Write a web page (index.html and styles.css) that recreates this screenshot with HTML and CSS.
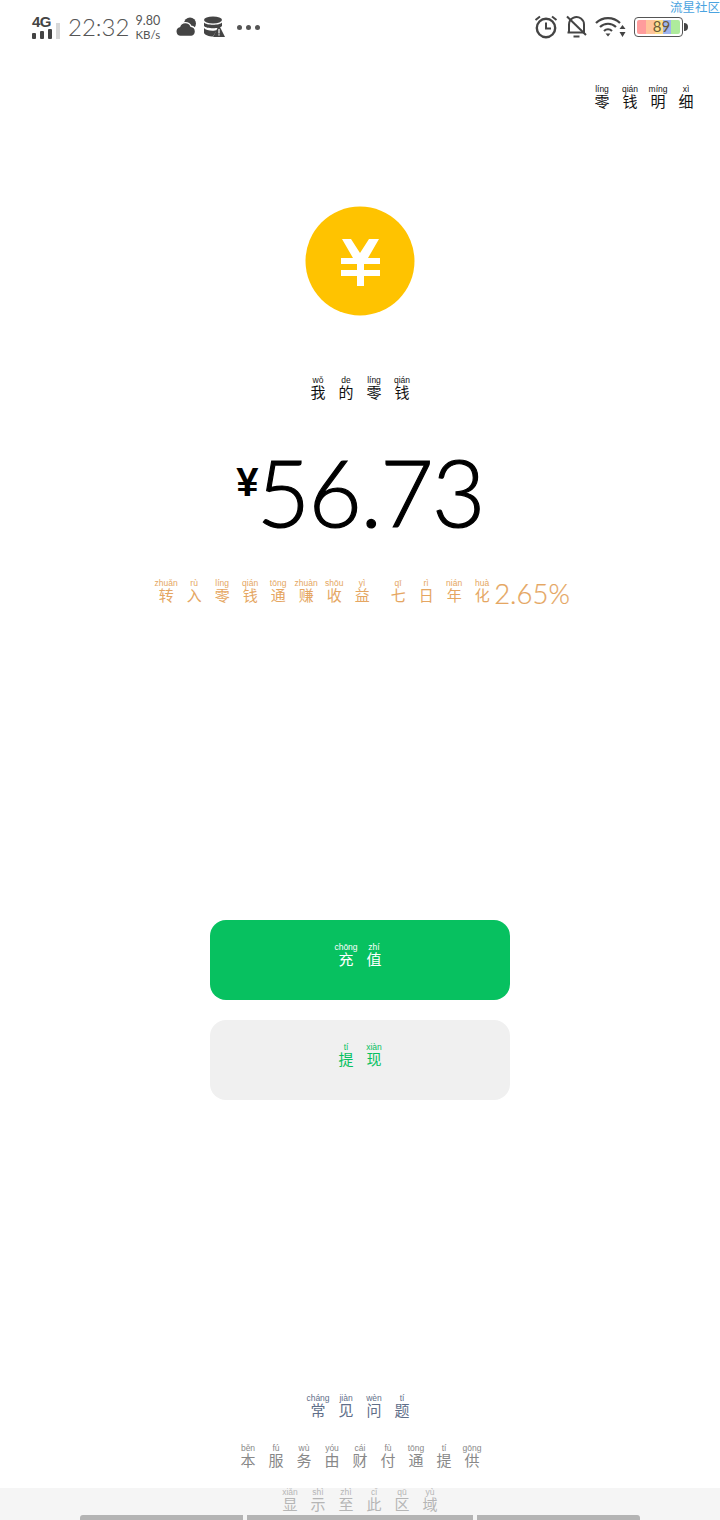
FILE: index.html
```html
<!DOCTYPE html>
<html lang="zh-CN">
<head>
  <meta charset="UTF-8">
  <meta name="viewport" content="width=device-width, initial-scale=1.0">
  <title>我的零钱</title>
  <link rel="stylesheet" href="styles.css">
</head>
<body>
  <div class="page">
    <span class="watermark">流星社区</span>

    <div class="statusbar">
      <div class="status-left">
        <div class="signal">
          <span class="signal-type">4G</span>
          <div class="signal-bars"><i></i><i></i><i></i></div>
          <i class="signal-empty"></i>
        </div>
        <span class="clock">22:32</span>
        <div class="speed"><span>9.80</span><span class="speed-unit">KB/s</span></div>
        <svg class="icon-cloud" width="22" height="20" viewBox="0 0 22 20">
          <circle cx="15" cy="6.5" r="6" fill="#444"/>
          <path d="M5.5 19.5 A5 5 0 0 1 4.5 9.7 A6.2 6.2 0 0 1 16 9.3 A5.2 5.2 0 0 1 16.5 19.5Z" fill="#444" stroke="#fff" stroke-width="1.4"/>
        </svg>
        <svg class="icon-db" width="22" height="22" viewBox="0 0 22 22">
          <ellipse cx="10" cy="4" rx="9" ry="3.4" fill="#444"/>
          <path d="M1 6.5 C3 9.5 17 9.5 19 6.5 V10 C17 13 3 13 1 10Z" fill="#444"/>
          <path d="M1 12 C3 15 11 15.4 14 14 L10 20.5 C6 20.5 2 19 1 17Z" fill="#444"/>
          <path d="M16 9 L22 21 H10Z" fill="#444"/>
          <path d="M15.4 13 h1.2 v4.4 h-1.2z M15.4 18.2 h1.2 v1.3 h-1.2z" fill="#fff"/>
        </svg>
        <div class="dots"><i></i><i></i><i></i></div>
      </div>
      <div class="status-right">
        <svg width="24" height="24" viewBox="0 0 24 24" fill="none" stroke="#444">
          <circle cx="12" cy="13" r="9.2" stroke-width="2.4"/>
          <path d="M12 7.5 V13.5 H17" stroke-width="2"/>
          <path d="M1.5 5 L6 1.5 M22.5 5 L18 1.5" stroke-width="2"/>
        </svg>
        <svg width="21" height="24" viewBox="0 0 21 24" fill="none" stroke="#444" stroke-width="2">
          <path d="M3 17.5 V9.5 A7.5 7.5 0 0 1 15 3.5 A7.5 7.5 0 0 1 18 9.5 V17.5 H1.5"/>
          <path d="M7.5 21.5 H13.5"/>
          <path d="M1 1.5 L20 20"/>
        </svg>
        <svg width="31" height="22" viewBox="0 0 31 22" fill="none" stroke="#444" stroke-width="2.2">
          <path d="M1 7 A17 17 0 0 1 25 7"/>
          <path d="M5 11 A11.5 11.5 0 0 1 21 11"/>
          <path d="M9 15 A6 6 0 0 1 17 15"/>
          <path d="M13 20.5 L10.5 17.5 H15.5Z" fill="#444" stroke="none"/>
          <path d="M27.5 9 L30.5 13 H24.5Z M27.5 21 L30.5 16 H24.5Z" fill="#444" stroke="none"/>
        </svg>
        <div class="battery">
          <div class="battery-body">
            <div class="battery-fill"></div>
            <span class="battery-num">89</span>
          </div>
          <i class="battery-tip"></i>
        </div>
      </div>
    </div>

    <div class="detail-link">
      <ruby>零<rt>líng</rt></ruby><ruby>钱<rt>qián</rt></ruby><ruby>明<rt>míng</rt></ruby><ruby>细<rt>xì</rt></ruby>
    </div>

    <div class="wallet">
      <svg class="coin" width="110" height="110" viewBox="0 0 110 110">
        <circle cx="55" cy="55" r="54.5" fill="#ffc300"/>
        <path d="M37 33 H46 L55 47 L64 33 H74 L63 52 H75 V58 H59 V64 H75 V70 H59 V80 H52 V70 H36 V64 H52 V58 H36 V52 H48Z" fill="#fff"/>
      </svg>

      <div class="wallet-title">
        <ruby>我<rt>wǒ</rt></ruby><ruby>的<rt>de</rt></ruby><ruby>零<rt>líng</rt></ruby><ruby>钱<rt>qián</rt></ruby>
      </div>

      <div class="amount"><span class="amount-sign">¥</span>56.73</div>

      <div class="promo">
        <ruby>转<rt>zhuǎn</rt></ruby><ruby>入<rt>rù</rt></ruby><ruby>零<rt>líng</rt></ruby><ruby>钱<rt>qián</rt></ruby><ruby>通<rt>tōng</rt></ruby><ruby>赚<rt>zhuàn</rt></ruby><ruby>收<rt>shōu</rt></ruby><ruby>益<rt>yì</rt></ruby>
        <i class="promo-gap"></i>
        <ruby>七<rt>qī</rt></ruby><ruby>日<rt>rì</rt></ruby><ruby>年<rt>nián</rt></ruby><ruby>化<rt>huà</rt></ruby>
        <span class="promo-rate">2.65%</span>
      </div>
    </div>

    <div class="actions">
      <div class="btn btn-green"><ruby>充<rt>chōng</rt></ruby><ruby>值<rt>zhí</rt></ruby></div>
      <div class="btn btn-gray"><ruby>提<rt>tí</rt></ruby><ruby>现<rt>xiàn</rt></ruby></div>
    </div>

    <div class="footer">
      <div class="faq">
        <ruby>常<rt>cháng</rt></ruby><ruby>见<rt>jiàn</rt></ruby><ruby>问<rt>wèn</rt></ruby><ruby>题<rt>tí</rt></ruby>
      </div>
      <div class="provider">
        <ruby>本<rt>běn</rt></ruby><ruby>服<rt>fú</rt></ruby><ruby>务<rt>wù</rt></ruby><ruby>由<rt>yóu</rt></ruby><ruby>财<rt>cái</rt></ruby><ruby>付<rt>fù</rt></ruby><ruby>通<rt>tōng</rt></ruby><ruby>提<rt>tí</rt></ruby><ruby>供<rt>gōng</rt></ruby>
      </div>
    </div>

    <div class="bottom-band">
      <div class="band-text">
        <ruby>显<rt>xiǎn</rt></ruby><ruby>示<rt>shì</rt></ruby><ruby>至<rt>zhì</rt></ruby><ruby>此<rt>cǐ</rt></ruby><ruby>区<rt>qū</rt></ruby><ruby>域<rt>yù</rt></ruby>
      </div>
      <div class="band-bars"><i></i><i class="band-bar-mid"></i><i></i></div>
    </div>
  </div>
</body>
</html>
```

FILE: styles.css
```css
* {
  box-sizing: border-box;
  margin: 0;
  padding: 0;
}

body {
  background: #fff;
  font-family: "Noto Sans CJK SC", "Liberation Sans", sans-serif;
}

.page {
  position: relative;
  width: 720px;
  height: 1520px;
  overflow: hidden;
  background: #fff;
}

i {
  display: block;
}

/* pinyin over each character */
ruby {
  display: inline-flex;
  flex-direction: column;
  align-items: center;
  width: 28px;
  font-size: 15px;
  line-height: 14px;
  font-weight: 400;
  ruby-position: over;
}

rt {
  display: block;
  order: -1;
  height: 9px;
  font-family: "Liberation Sans", sans-serif;
  font-size: 8.5px;
  line-height: 9px;
  white-space: nowrap;
  text-align: center;
}

.watermark {
  position: absolute;
  top: 0;
  right: 0;
  font-size: 12.5px;
  line-height: 13px;
  color: #4aa3e0;
}

/* status bar */
.statusbar {
  display: flex;
  justify-content: space-between;
  align-items: center;
  height: 52px;
  padding: 2px 32px 0;
  color: #555;
}

.status-left,
.status-right {
  display: flex;
  align-items: center;
}

.status-right {
  gap: 8px;
}

.signal {
  display: grid;
  grid-template-columns: 20px 4px;
  column-gap: 4px;
  align-items: end;
  height: 24px;
}

.signal-type {
  grid-column: 1;
  font-family: "Liberation Sans", sans-serif;
  font-weight: 700;
  font-size: 15px;
  line-height: 13px;
  letter-spacing: -0.5px;
  color: #444;
}

.signal-bars {
  grid-column: 1;
  grid-row: 2;
  display: flex;
  justify-content: space-between;
  align-items: flex-end;
  height: 11px;
}

.signal-bars i {
  width: 4px;
  height: 6px;
  background: #444;
  border-radius: 1px;
}

.signal-bars i:nth-child(2) {
  height: 8px;
}

.signal-bars i:nth-child(3) {
  height: 10px;
}

.signal-empty {
  grid-column: 2;
  grid-row: 1 / 3;
  height: 16px;
  background: #d8d8d8;
}

.clock {
  margin-left: 8px;
  font-family: Lato, sans-serif;
  font-weight: 300;
  font-size: 24px;
  line-height: 30px;
  color: #555;
}

.speed {
  display: flex;
  flex-direction: column;
  margin-left: 6px;
  font-family: Lato, sans-serif;
  font-size: 12.5px;
  line-height: 15px;
  color: #555;
}

.speed-unit {
  font-size: 11.5px;
  line-height: 13px;
}

.icon-cloud {
  margin-left: 15px;
}

.icon-db {
  margin-left: 6px;
}

.dots {
  display: flex;
  gap: 4px;
  margin-left: 12px;
}

.dots i {
  width: 5px;
  height: 5px;
  border-radius: 50%;
  background: #555;
}

.battery {
  display: flex;
  align-items: center;
  gap: 1px;
}

.battery-body {
  position: relative;
  width: 49px;
  height: 20px;
  padding: 2px;
  border: 1px solid #555;
  border-radius: 4px;
}

.battery-fill {
  width: 100%;
  height: 100%;
  border-radius: 2px;
  background: linear-gradient(90deg, #ff9c9c 0, #ff9c9c 20%, #ffc49a 20%, #ffc49a 41%, #ffe08e 41%, #ffe08e 61%, #9db4ee 61%, #9db4ee 79%, #aeeb9c 79%);
}

.battery-num {
  position: absolute;
  top: 0;
  left: 6px;
  right: 0;
  font-family: Lato, sans-serif;
  font-size: 15px;
  line-height: 17px;
  text-align: center;
  color: #6a5a3a;
}

.battery-tip {
  width: 4px;
  height: 8px;
  background: #444;
  border-radius: 0 4px 4px 0;
}

/* top right link */
.detail-link {
  display: flex;
  justify-content: flex-end;
  margin-top: 33px;
  padding-right: 20px;
  color: #111;
}

/* balance block */
.wallet {
  display: flex;
  flex-direction: column;
  align-items: center;
  margin-top: 98px;
}

.coin {
  display: block;
}

.wallet-title {
  display: flex;
  margin-top: 60px;
  color: #111;
}

.amount {
  display: flex;
  align-items: flex-start;
  margin-top: 33px;
  font-family: Lato, sans-serif;
  font-weight: 300;
  font-size: 92px;
  line-height: 120px;
  letter-spacing: -1.6px;
  -webkit-text-stroke: 1.2px #000;
  color: #000;
}

.amount-sign {
  margin-top: 20px;
  font-family: "Liberation Sans", sans-serif;
  font-weight: 700;
  font-size: 40px;
  line-height: 60px;
  -webkit-text-stroke: 0;
}

.promo {
  display: flex;
  align-items: flex-end;
  margin-top: 27px;
  padding-left: 2px;
  color: #e5a662;
}

.promo-gap {
  width: 8px;
}

.promo-rate {
  margin-left: -2px;
  margin-bottom: -7px;
  font-family: Lato, sans-serif;
  font-weight: 300;
  font-size: 27.5px;
  line-height: 30px;
  -webkit-text-stroke: 0.2px #e5a662;
}

/* buttons */
.actions {
  position: absolute;
  top: 920px;
  left: 210px;
  display: flex;
  flex-direction: column;
  gap: 20px;
  width: 300px;
}

.btn {
  display: flex;
  justify-content: center;
  align-items: center;
  height: 80px;
  padding-bottom: 12px;
  border-radius: 16px;
}

.btn-green {
  background: #07c160;
  color: #fff;
}

.btn-gray {
  background: #f0f0f0;
  color: #07c160;
}

/* footer */
.footer {
  position: absolute;
  top: 1394px;
  left: 0;
  right: 0;
  display: flex;
  flex-direction: column;
  align-items: center;
  gap: 27px;
}

.faq,
.provider {
  display: flex;
}

.faq {
  color: #5f6f8a;
}

.provider {
  color: #888;
}

.bottom-band {
  position: absolute;
  left: 0;
  right: 0;
  bottom: 0;
  display: flex;
  flex-direction: column;
  align-items: center;
  justify-content: space-between;
  height: 32px;
  background: #f5f5f5;
}

.band-text {
  display: flex;
  height: 27px;
  color: #b5b5b5;
}

.band-bars {
  display: flex;
  gap: 4px;
  width: 560px;
}

.band-bars i {
  width: 163px;
  height: 5px;
  background: #b4b4b4;
}

.band-bars i:first-child {
  border-top-left-radius: 3px;
}

.band-bars i:last-child {
  border-top-right-radius: 3px;
}

.band-bars .band-bar-mid {
  width: 226px;
}
```
